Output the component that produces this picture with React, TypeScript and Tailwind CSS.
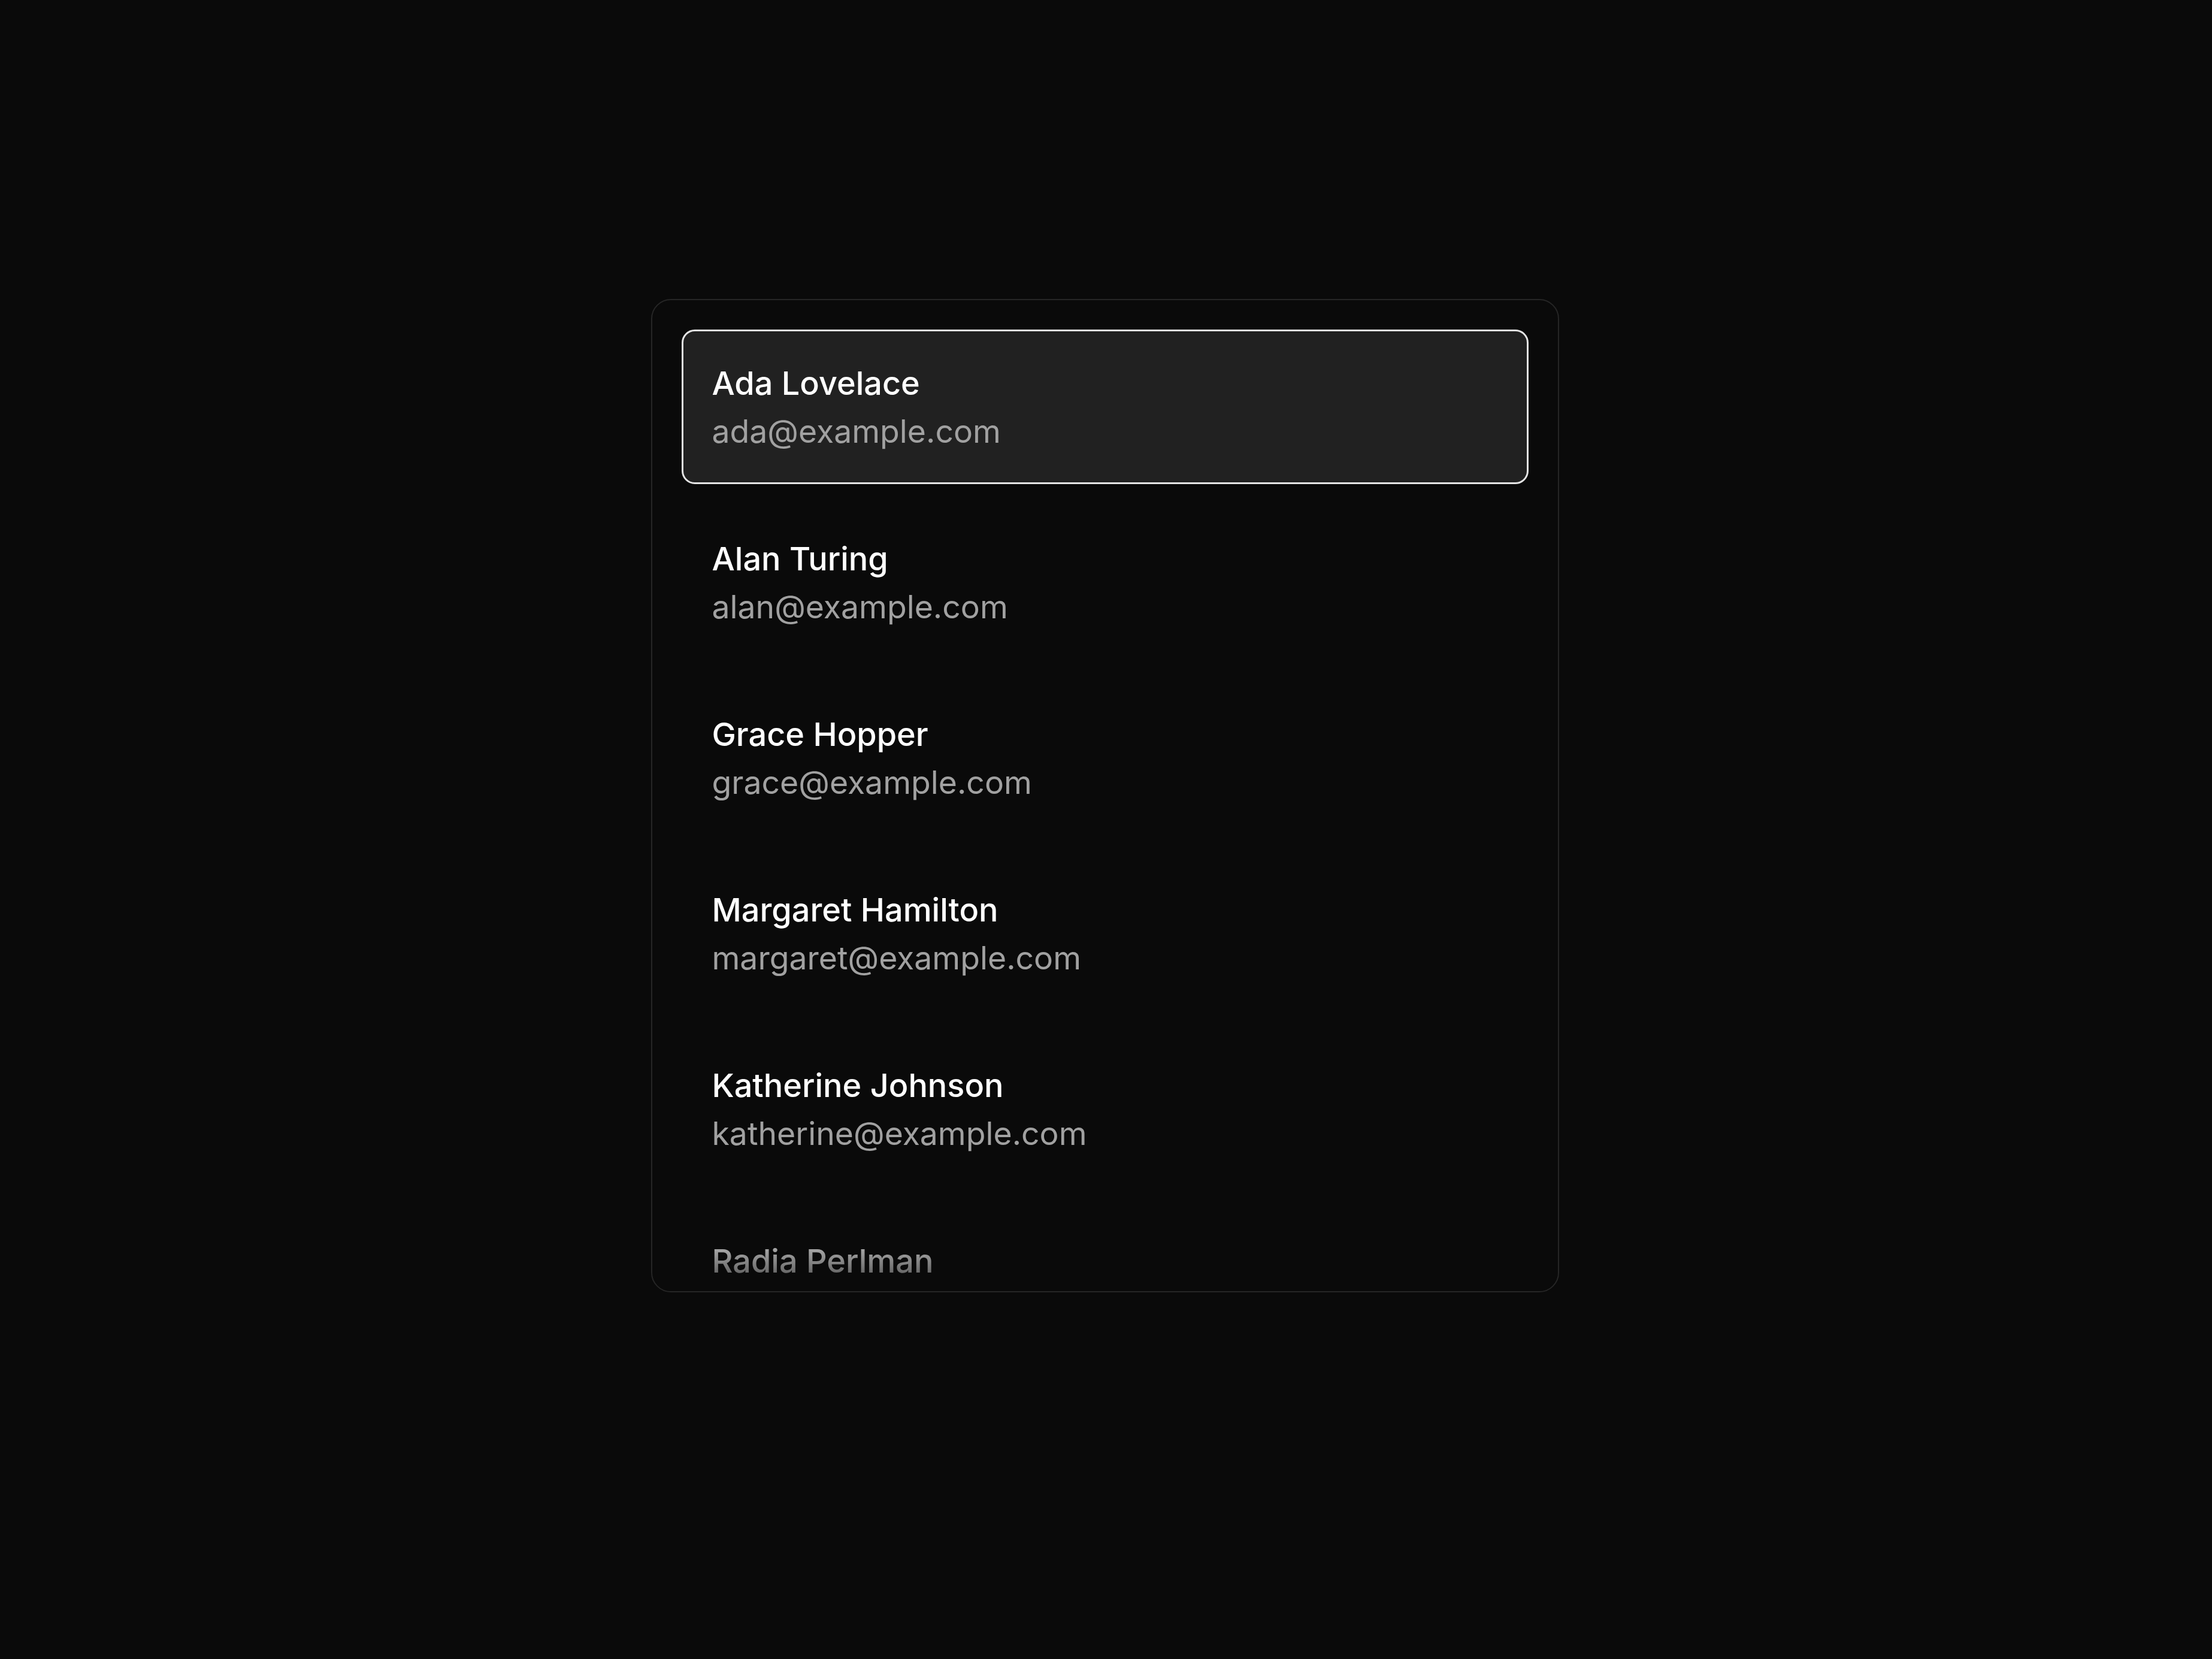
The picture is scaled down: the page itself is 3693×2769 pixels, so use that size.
import React from 'react';

const people = [
  { name: 'Ada Lovelace', email: 'ada@example.com' },
  { name: 'Alan Turing', email: 'alan@example.com' },
  { name: 'Grace Hopper', email: 'grace@example.com' },
  { name: 'Margaret Hamilton', email: 'margaret@example.com' },
  { name: 'Katherine Johnson', email: 'katherine@example.com' },
  { name: 'Radia Perlman', email: 'radia@example.com' },
  { name: 'Barbara Liskov', email: 'barbara@example.com' },
];

export default function App() {
  const selected = 0;

  return (
    <div className="min-h-screen w-full bg-[#0a0a0a] flex justify-center pt-[499px] pr-[4px] font-['Inter','Liberation_Sans',sans-serif]">
      <div className="relative w-[1516px] h-[1658px] rounded-[33px] border-2 border-[#262626] bg-[#0a0a0a] overflow-hidden">
        <ul className="flex flex-col gap-[35px] px-[49px] pt-[49px] pb-[49px]">
          {people.map((p, i) => (
            <li
              key={p.email}
              className={
                i === selected
                  ? 'rounded-[22px] border-[3px] border-[#e5e5e5] bg-[#212121] px-[48px] pt-[48px] pb-[47px]'
                  : 'rounded-[22px] border-[3px] border-transparent px-[48px] pt-[48px] pb-[47px]'
              }
            >
              <div className="text-[54px] leading-[77px] font-medium text-white">{p.name}</div>
              <div className="mt-[3px] text-[53.5px] leading-[77px] text-[#a1a1a1]">{p.email}</div>
            </li>
          ))}
        </ul>
        <div className="pointer-events-none absolute inset-x-0 bottom-0 h-[130px] bg-linear-to-b from-transparent to-[#0a0a0a]/80" />
      </div>
    </div>
  );
}
